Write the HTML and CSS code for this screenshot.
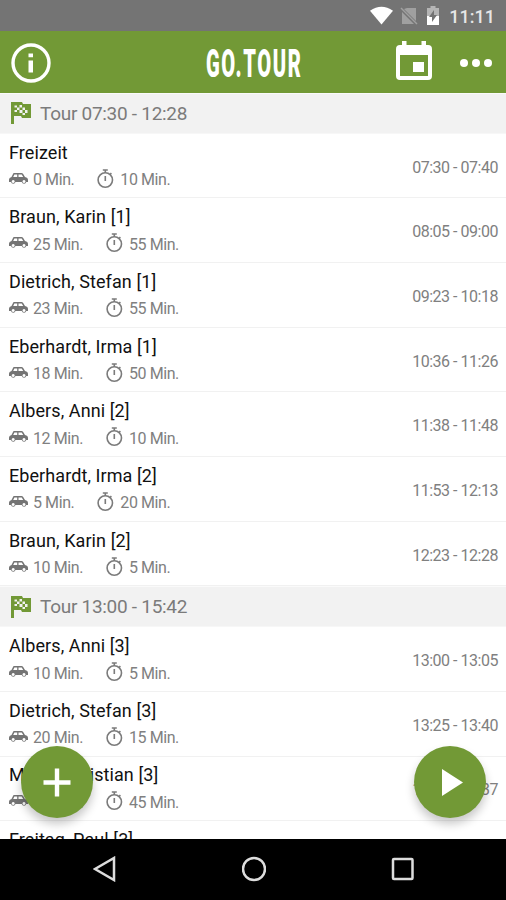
FILE: index.html
```
<!DOCTYPE html>
<html lang="de">
<head>
<meta charset="utf-8">
<title>GO.TOUR</title>
<link rel="stylesheet" href="styles.css">
</head>
<body>
<svg class="defs" aria-hidden="true">
  <symbol id="flag" viewBox="0 0 20 22"><path fill="#729936" d="M0 0h11l1 2h8v14h-9l-1-2H3v8H0z"/><path fill="#f2f2f2" d="M3.500 3.500h2.500v2H3.500zM8.500 3h2.500v2.500H8.500zM6 5.500h2.500V8H6zM3.500 8h2.500v2H3.500zM8.500 8h3v3h-3zM11.500 5.500H14V8h-2.500zM11.500 11H14v2h-2.500zM14 8h2.500v3H14z"/></symbol>
  <symbol id="car" viewBox="0 0 19 12"><path fill="#747474" fill-rule="evenodd" d="M5 0h7.500q1 0 1.700 1L16 4q3 .5 3 3v2h-1.700a2.300 2.300 0 0 1-4.500 0H6.500a2.300 2.300 0 0 1-4.500 0H0V6.500Q0 4.500 2.500 4L4 1q.300-1 1-1zM5.400 1.400 4.200 4h4V1.400zM9.500 1.400V4h4.700l-1.500-2.600zM4.200 7a1.500 1.500 0 1 0 .01 0zM15 7a1.500 1.500 0 1 0 .01 0z"/></symbol>
  <symbol id="watch" viewBox="0 0 17 19"><g fill="none" stroke="#7b7b7b" stroke-width="1.600"><circle cx="8.300" cy="11" r="7.200"/><path d="M5.800 1h5M8.300 1v3M8.300 7v5M13 5.500l1.400-1.400"/></g></symbol>
</svg>
<div class="screen">
  <div class="status">
    <svg class="wifi" viewBox="0 0 24 19"><path fill="#fff" d="M0 4.500Q12-4 24 4.500L12 19z"/></svg>
    <svg class="sim" viewBox="0 0 18 18"><path fill="#a0a0a0" d="M7 1h9v13L4 2zM2 5l12 12H2z"/><path d="M1 1l16 16" stroke="#a0a0a0" stroke-width="1.500"/></svg>
    <svg class="battery" viewBox="0 0 12 19"><path fill="#b5b5b5" d="M3.500 0h5v2H12v8H0V2h3.500z"/><path fill="#fff" d="M0 10h12v9H0z"/><path fill="#747474" d="M7 4v5h3l-5 7v-5H2z"/></svg>
    <span class="clock">11:11</span>
  </div>
  <header class="bar">
    <svg class="info" viewBox="0 0 40 40"><circle cx="20" cy="20" r="18" fill="none" stroke="#fff" stroke-width="3.400"/><path fill="#fff" d="M17.500 10.500h4.500v3.800h-4.500zM17.500 17.500h4.500v12h-4.500z"/></svg>
    <h1 class="brand"><span>GO.TOUR</span></h1>
    <svg class="calendar" viewBox="0 0 36 39"><path fill="#fff" fill-rule="evenodd" d="M6 0h4.500v4h15V0H30v4h2q4 0 4 4v27q0 4-4 4H4q-4 0-4-4V8q0-4 4-4h2zM4 14v21h28V14zM17 21h11v10H17z"/></svg>
    <svg class="dots" viewBox="0 0 32 8"><g fill="#fff"><circle cx="4" cy="4" r="4"/><circle cx="16" cy="4" r="4"/><circle cx="28" cy="4" r="4"/></g></svg>
  </header>
  <main class="list" id="list"></main>
  <button class="fab add" aria-label="Hinzufügen"><svg viewBox="0 0 72 72"><path d="M36 22.500v28M22.500 36.500h27" stroke="#fff" stroke-width="4.400"/></svg></button>
  <button class="fab play" aria-label="Starten"><svg viewBox="0 0 72 72"><path fill="#fff" d="M28 23v27l21-13.500z"/></svg></button>
  <nav class="nav">
    <svg viewBox="0 0 24 26"><path d="M21 2v22L2 13z"/></svg>
    <svg viewBox="0 0 24 26"><circle cx="12" cy="13" r="11"/></svg>
    <svg viewBox="0 0 24 26"><rect x="2" y="3" width="19.500" height="20" rx="1"/></svg>
  </nav>
</div>
<script src="app.js"></script>
</body>
</html>
```
FILE: styles.css
```
* { box-sizing: border-box; }
body { margin: 0; font-family: Roboto, sans-serif; background: #fff; }
svg { display: block; flex: none; }
.defs { position: absolute; width: 0; height: 0; }
.screen { position: relative; width: 506px; height: 900px; display: flex; flex-direction: column; overflow: hidden; }
.status { height: 31px; flex: none; background: #747474; display: flex; align-items: center; justify-content: flex-end; padding-right: 11px; }
.wifi { width: 23px; height: 19px; margin-right: 7px; }
.sim { width: 18px; height: 18px; margin-right: 9px; }
.battery { width: 12px; height: 19px; margin-right: 10px; }
.clock { color: #e6e6e6; font-size: 18px; font-weight: 500; line-height: 31px; padding-top: 2px; }
.bar { height: 62px; flex: none; background: #729936; display: flex; align-items: center; padding: 1px 14px 0 11px; }
.info { width: 40px; height: 40px; }
.brand { margin: 2px 0 0 155px; width: 95px; font-size: 38px; line-height: 60px; font-weight: 900; color: #fff; }
.brand span { display: block; width: max-content; letter-spacing: 3px; transform: scaleX(.53); transform-origin: left; }
.calendar { width: 36px; height: 39px; margin: 0 28px 5px auto; }
.dots { width: 32px; height: 8px; }
.list { flex: 1; min-height: 0; overflow: hidden; }
.group { height: 40.800px; background: #f2f2f2; border-top: 1px solid #fafafa; border-bottom: 1px solid #f7f7f7; display: flex; align-items: center; padding-left: 11px; font-size: 19px; letter-spacing: -.28px; color: #7b7b7b; }
.group svg { width: 20px; height: 22px; margin-right: 9px; }
.row { height: 64.660px; border-bottom: 1px solid #f1f1f1; display: flex; justify-content: space-between; align-items: center; padding: 0 8px 0 9px; }
.name { font-size: 18px; line-height: 24px; letter-spacing: .08px; color: #111; }
.meta { display: flex; align-items: center; height: 22px; margin-top: 4px; font-size: 16px; letter-spacing: -.42px; color: #808080; white-space: pre; }
.car { width: 19px; height: 12px; margin: 0 5px 2px 0; }
.watch { width: 17px; height: 19px; margin: 0 6px 3px 23px; }
.time { font-size: 16px; letter-spacing: -.48px; color: #808080; padding-top: 3px; }
.fab { position: absolute; top: 746px; width: 72px; height: 72px; border: 0; padding: 0; border-radius: 50%; background: #729936; box-shadow: 0 6px 10px rgba(0,0,0,.22); }
.add { left: 21px; }
.play { left: 414px; }
.nav { height: 61px; flex: none; background: #000; display: flex; justify-content: space-between; padding: 17px 91px 0 93px; }
.nav svg { width: 24px; height: 26px; fill: none; stroke: #ddd; stroke-width: 2.500; }
```
FILE: app.js
```
const groups = [
  ["Tour 07:30 - 12:28", [
    ["Freizeit", 0, 10, "07:30 - 07:40"],
    ["Braun, Karin [1]", 25, 55, "08:05 - 09:00"],
    ["Dietrich, Stefan [1]", 23, 55, "09:23 - 10:18"],
    ["Eberhardt, Irma [1]", 18, 50, "10:36 - 11:26"],
    ["Albers, Anni [2]", 12, 10, "11:38 - 11:48"],
    ["Eberhardt, Irma [2]", 5, 20, "11:53 - 12:13"],
    ["Braun, Karin [2]", 10, 5, "12:23 - 12:28"]]],
  ["Tour 13:00 - 15:42", [
    ["Albers, Anni [3]", 10, 5, "13:00 - 13:05"],
    ["Dietrich, Stefan [3]", 20, 15, "13:25 - 13:40"],
    ["Meier, Christian [3]", 12, 45, "13:52 - 14:37"],
    ["Freitag, Paul [3]", 10, 20, "14:47 - 15:07"]]]
];
const icon = (id) => `<svg class="${id}"><use href="#${id}"/></svg>`;
document.getElementById("list").innerHTML = groups.map(([title, rows]) =>
  `<div class="group">${icon("flag")}${title}</div>` + rows.map(([name, drive, stay, time]) =>
    `<div class="row"><div><div class="name">${name}</div><div class="meta">${icon("car")}<span>${drive} Min.</span>${icon("watch")}<span>${stay} Min.</span></div></div><div class="time">${time}</div></div>`
  ).join("")).join("");
```
